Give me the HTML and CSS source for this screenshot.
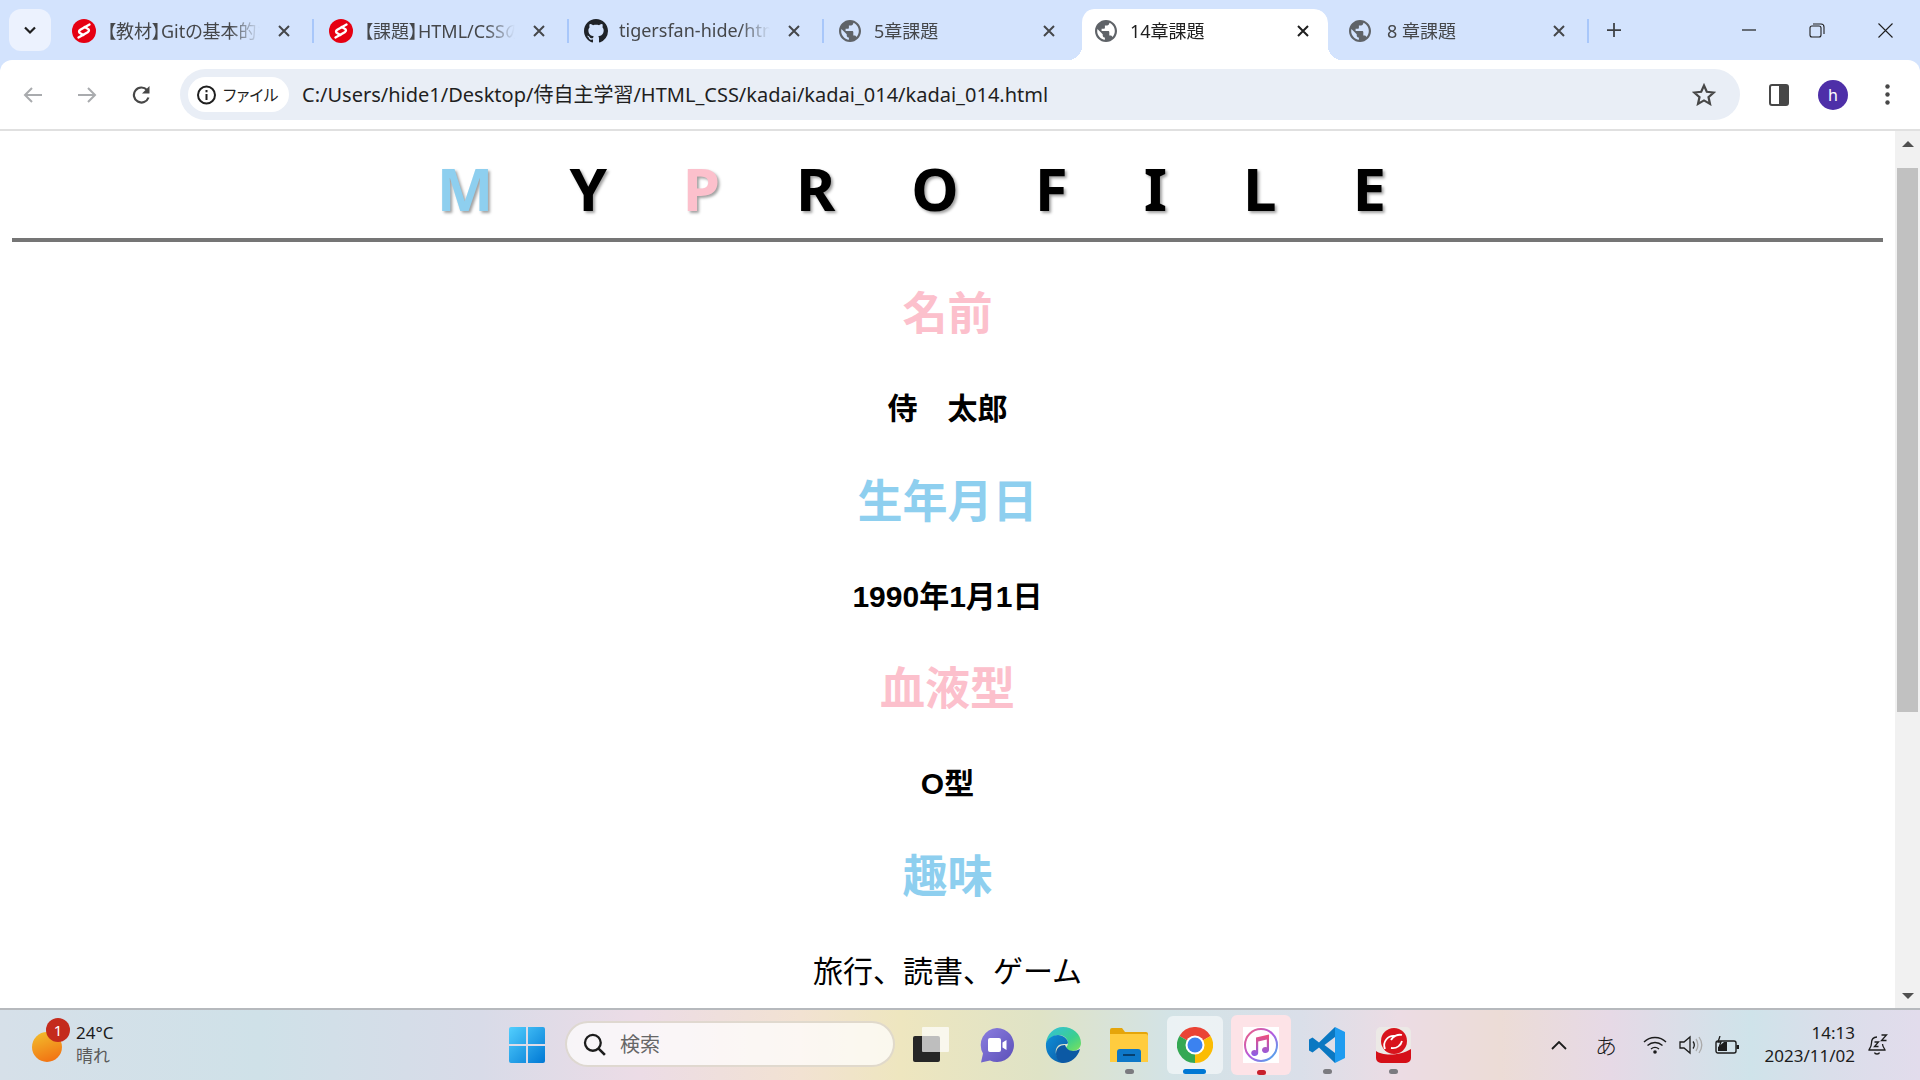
FILE: index.html
```html
<!DOCTYPE html>
<html lang="ja">
<head>
    <meta charset="UTF-8">
    <title>14章課題</title>
    <link rel="stylesheet" href="styles.css">
</head>
<body>
    <svg class="defs" width="0" height="0">
        <symbol id="globe" viewBox="2 2 20 20"><path d="M12 2C6.48 2 2 6.48 2 12s4.48 10 10 10 10-4.48 10-10S17.52 2 12 2zm-1 17.930c-3.950-.49-7-3.850-7-7.930 0-.62.08-1.210.21-1.790L9 15v1c0 1.100.9 2 2 2v1.930zm6.900-2.540c-.26-.81-1-1.390-1.900-1.390h-1v-3c0-.55-.45-1-1-1H8v-2h2c.55 0 1-.45 1-1V7h2c1.100 0 2-.9 2-2v-.41c2.930 1.190 5 4.060 5 7.410 0 2.080-.8 3.970-2.100 5.390z" fill="#5f6368"/></symbol>
        <symbol id="x" viewBox="0 0 12 12"><path d="M1 1l10 10M11 1L1 11" stroke="currentColor" stroke-width="2" fill="none"/></symbol>
        <symbol id="samurai" viewBox="0 0 24 24"><circle cx="12" cy="12" r="12" fill="#e60012"/><path d="M17.500 5.500L8.300 10.800c-1.800 1.200-1.500 2.700 0 3.500l3 1.700" stroke="#fff" stroke-width="2.400" stroke-linecap="round" fill="none"/><path d="M6.500 18.500l9.200-5.300c1.800-1.200 1.500-2.700 0-3.500l-3-1.700" stroke="#fff" stroke-width="2.400" stroke-linecap="round" fill="none"/></symbol>
    </svg>

    <div class="tabstrip">
        <button class="tab-search"><svg width="14" height="9" viewBox="0 0 14 9"><path d="M2 1.500l5 5 5-5" stroke="#1f1f1f" stroke-width="2.200" fill="none"/></svg></button>
        <div class="tab first">
            <svg class="favicon"><use href="#samurai"/></svg>
            <span class="tab-title">【教材】Gitの基本的な</span>
            <svg class="tab-close"><use href="#x"/></svg>
        </div>
        <div class="tab">
            <svg class="favicon"><use href="#samurai"/></svg>
            <span class="tab-title">【課題】HTML/CSSの</span>
            <svg class="tab-close"><use href="#x"/></svg>
        </div>
        <div class="tab">
            <svg class="favicon" viewBox="0 0 16 16"><path fill="#1f2328" d="M8 0C3.580 0 0 3.580 0 8c0 3.540 2.290 6.530 5.470 7.590.4.07.55-.17.55-.38 0-.19-.01-.82-.01-1.490-2.010.37-2.530-.49-2.690-.94-.09-.23-.48-.94-.82-1.130-.28-.15-.68-.52-.01-.53.63-.01 1.080.58 1.230.82.72 1.210 1.870.87 2.330.66.07-.52.28-.87.51-1.070-1.780-.2-3.640-.89-3.640-3.950 0-.87.31-1.590.82-2.150-.08-.2-.36-1.020.08-2.120 0 0 .67-.21 2.200.82.64-.18 1.320-.27 2-.27.68 0 1.360.09 2 .27 1.530-1.040 2.200-.82 2.200-.82.44 1.100.16 1.920.08 2.120.51.56.82 1.270.82 2.150 0 3.070-1.870 3.750-3.650 3.950.29.25.54.73.54 1.480 0 1.070-.01 1.930-.01 2.200 0 .21.15.46.55.38A8.013 8.013 0 0016 8c0-4.420-3.580-8-8-8z"/></svg>
            <span class="tab-title">tigersfan-hide/html</span>
            <svg class="tab-close"><use href="#x"/></svg>
        </div>
        <div class="tab">
            <svg class="favicon globe"><use href="#globe"/></svg>
            <span class="tab-title">5章課題</span>
            <svg class="tab-close"><use href="#x"/></svg>
        </div>
        <div class="tab active">
            <svg class="favicon globe"><use href="#globe"/></svg>
            <span class="tab-title">14章課題</span>
            <svg class="tab-close"><use href="#x"/></svg>
        </div>
        <div class="tab after-active">
            <svg class="favicon globe"><use href="#globe"/></svg>
            <span class="tab-title">8 章課題</span>
            <svg class="tab-close"><use href="#x"/></svg>
        </div>
        <div class="tab-end">
            <svg width="16" height="16" viewBox="0 0 16 16"><path d="M8 0v16M0 8h16" stroke="#3c3f43" stroke-width="2"/></svg>
        </div>
        <div class="window-controls">
            <span class="win-btn"><svg width="14" height="2"><path d="M0 1h14" stroke="#1f1f1f" stroke-width="1.200"/></svg></span>
            <span class="win-btn"><svg width="16" height="15" viewBox="0 0 16 15"><rect x="1" y="3" width="11" height="11" rx="2" stroke="#1f1f1f" fill="none" stroke-width="1.100"/><path d="M4 1h8c2 0 3 1 3 3v7" stroke="#1f1f1f" fill="none" stroke-width="1.100"/></svg></span>
            <span class="win-btn"><svg width="15" height="15"><path d="M.5.5l14 14M14.500.5l-14 14" stroke="#1f1f1f" stroke-width="1.100"/></svg></span>
        </div>
    </div>

    <div class="toolbar">
        <span class="nav-btn"><svg width="20" height="16" viewBox="0 0 20 16"><path d="M19 8H2M9 1L2 8l7 7" stroke="#a9abae" stroke-width="2" fill="none"/></svg></span>
        <span class="nav-btn"><svg width="20" height="16" viewBox="0 0 20 16"><path d="M1 8h17M11 1l7 7-7 7" stroke="#a9abae" stroke-width="2" fill="none"/></svg></span>
        <span class="nav-btn"><svg width="19" height="18" viewBox="0 0 19 18"><path d="M16.500 11.500A7.500 7.500 0 1 1 15 4" stroke="#474747" stroke-width="2.200" fill="none"/><path d="M17.500 0v7.500H10z" fill="#474747"/></svg></span>
        <div class="omnibox">
            <div class="chip">
                <svg width="24" height="20" viewBox="0 0 24 20"><circle cx="10.500" cy="10" r="8.500" stroke="#1f1f1f" stroke-width="2" fill="none"/><path d="M10.500 9v6M10.500 5v2.200" stroke="#1f1f1f" stroke-width="2"/></svg>
                <span>ファイル</span>
            </div>
            <span class="url">C:/Users/hide1/Desktop/侍自主学習/HTML_CSS/kadai/kadai_014/kadai_014.html</span>
            <svg class="star" width="24" height="23" viewBox="0 0 24 23"><path d="M12 2.500l2.800 6.300 6.900.7-5.200 4.600 1.500 6.800-6-3.500-6 3.500 1.500-6.800-5.200-4.600 6.900-.7z" stroke="#474747" stroke-width="2.200" fill="none"/></svg>
        </div>
        <span class="nav-btn first-side"><svg width="20" height="22" viewBox="0 0 20 22"><rect x="1" y="1" width="18" height="20" rx="2" stroke="#474747" stroke-width="2" fill="#fff"/><rect x="10" y="1" width="9" height="20" fill="#474747"/></svg></span>
        <span class="nav-btn"><span class="avatar">h</span></span>
        <span class="nav-btn"><svg width="5" height="21" viewBox="0 0 5 21"><circle cx="2.500" cy="2.500" r="2.200" fill="#474747"/><circle cx="2.500" cy="10.500" r="2.200" fill="#474747"/><circle cx="2.500" cy="18.500" r="2.200" fill="#474747"/></svg></span>
    </div>

    <div class="viewport">
        <main class="page">
            <h1><span class="blue">M</span>Y <span class="pink">P</span>ROFILE</h1>
            <h2 class="pink">名前</h2>
            <p class="strong">侍　太郎</p>
            <h2 class="blue">生年月日</h2>
            <p class="strong">1990年1月1日</p>
            <h2 class="pink">血液型</h2>
            <p class="strong">O型</p>
            <h2 class="blue">趣味</h2>
            <p>旅行、読書、ゲーム</p>
        </main>
        <div class="scrollbar">
            <span class="arrow-up"></span>
            <span class="thumb"></span>
            <span class="arrow-down"></span>
        </div>
    </div>

    <div class="taskbar">
        <div class="weather">
            <span class="sun"><span class="badge">1</span></span>
            <div class="weather-text">
                <span>24°C</span>
                <span class="muted">晴れ</span>
            </div>
        </div>
        <span class="slot">
            <svg width="36" height="36" viewBox="0 0 36 36">
                <defs>
                    <linearGradient id="win" x1="0" y1="0" x2="1" y2="1"><stop offset="0" stop-color="#52cffe"/><stop offset="1" stop-color="#0078d4"/></linearGradient>
                </defs>
                <path fill="url(#win)" d="M0 2a2 2 0 0 1 2-2h15v17H0zM19 0h15a2 2 0 0 1 2 2v15H19zM0 19h17v17H2a2 2 0 0 1-2-2zM19 19h17v15a2 2 0 0 1-2 2H19z"/>
            </svg>
        </span>
        <div class="search">
            <svg width="23" height="23" viewBox="0 0 21 21"><circle cx="9" cy="9" r="7.200" stroke="#1c1c1c" stroke-width="2.100" fill="none"/><path d="M14 14l6 6" stroke="#1c1c1c" stroke-width="2.400"/></svg>
            <span>検索</span>
        </div>
        <span class="slot first-app">
            <svg width="36" height="36" viewBox="0 0 36 36"><rect y="9" width="27" height="26" rx="2" fill="#262626"/><rect x="9" y="0" width="27" height="25" rx="1" fill="#fff" fill-opacity=".7"/></svg>
        </span>
        <span class="slot">
            <svg width="36" height="36" viewBox="0 0 36 36">
                <defs>
                    <linearGradient id="chat" x1="0" y1="0" x2="1" y2="1"><stop offset="0" stop-color="#8c7fe0"/><stop offset="1" stop-color="#5b4fb8"/></linearGradient>
                </defs>
                <path fill="url(#chat)" d="M18 1a17 17 0 1 1-7 32.500L2 35.500l2-9A17 17 0 0 1 18 1z"/>
                <rect x="9" y="11" width="13" height="14" rx="2" fill="#fff"/>
                <path d="M23.500 15.500l4-2.500v10l-4-2.500z" fill="#fff"/>
            </svg>
        </span>
        <span class="slot">
            <svg width="36" height="36" viewBox="0 0 36 36">
                <defs>
                    <linearGradient id="edge1" x1="0" y1="0" x2="1" y2="1"><stop offset="0" stop-color="#33bfe0"/><stop offset=".6" stop-color="#3ccf8e"/><stop offset="1" stop-color="#7de25a"/></linearGradient>
                    <linearGradient id="edge2" x1="0" y1="0" x2="1" y2="1"><stop offset="0" stop-color="#0f8fd8"/><stop offset="1" stop-color="#0c59a4"/></linearGradient>
                </defs>
                <path fill="url(#edge1)" d="M1 16C2 7 9 0 18 0c10 0 18 7 18 16 0 5-4 8-9 8-3 0-6-1-6-3 0-1 2-2 2-5 0-4-4-8-9-8S4 11 1 16z"/>
                <path fill="url(#edge2)" d="M1 16C3 11 8 8 13 8c5 0 10 4 10 8 0 1-2 1-4 1-7 0-9 5-8 10 1 4 5 8 9 9C8 36 0 28 1 16z"/>
                <path fill="#0c59a4" d="M18 36c-4-1-7-5-7-9 0-6 4-9 9-9 1 3 4 6 8 6 2 0 5-1 7-2-2 8-9 14-17 14z"/>
            </svg>
        </span>
        <span class="slot has-dot">
            <svg width="38" height="34" viewBox="0 0 38 34">
                <path d="M0 2a2 2 0 0 1 2-2h10l3 4h21a2 2 0 0 1 2 2v4H0z" fill="#e5a50a"/>
                <path d="M0 6h36a2 2 0 0 1 2 2v26H0z" fill="#ffcc3f"/>
                <path d="M7 34V24a3 3 0 0 1 3-3h18a3 3 0 0 1 3 3v10z" fill="#0e78c8"/>
                <rect x="13" y="26" width="12" height="2" fill="#06406f"/>
            </svg>
        </span>
        <span class="slot chrome-slot">
            <svg width="36" height="36" viewBox="0 0 36 36">
                <path d="M18 18L2.400 9A18 18 0 0 1 33.600 9z" fill="#ea4335"/>
                <path d="M18 18L33.600 9A18 18 0 0 1 18 36z" fill="#fbbc04"/>
                <path d="M18 18L18 36A18 18 0 0 1 2.400 9z" fill="#34a853"/>
                <circle cx="18" cy="18" r="9.500" fill="#fff"/>
                <circle cx="18" cy="18" r="7.500" fill="#3b82f0"/>
            </svg>
            <span class="running"></span>
        </span>
        <span class="slot itunes-slot">
            <svg width="36" height="36" viewBox="0 0 36 36">
                <defs>
                    <linearGradient id="ring" x1="0" y1="0" x2="1" y2="1"><stop offset="0" stop-color="#f0607c"/><stop offset=".5" stop-color="#b45be0"/><stop offset="1" stop-color="#3bb6f0"/></linearGradient>
                    <linearGradient id="note" x1="0" y1="0" x2="0" y2="1"><stop offset="0" stop-color="#f0507c"/><stop offset="1" stop-color="#8a5ce8"/></linearGradient>
                </defs>
                <rect width="36" height="36" fill="#fff"/>
                <circle cx="18" cy="18" r="16" stroke="url(#ring)" stroke-width="2" fill="#fff"/>
                <path fill="url(#note)" d="M13 10.500L26 7.500v15.500a3.500 3 0 1 1-2.200-2.800V12.500l-8.600 2V26a3.500 3 0 1 1-2.200-2.800z"/>
            </svg>
            <span class="dot red"></span>
        </span>
        <span class="slot has-dot">
            <svg width="36" height="36" viewBox="0 0 36 36">
                <path d="M26 0l10 5v26l-10 5z" fill="#1f9cf0"/>
                <path d="M26 0L10 15.500 3.500 10.500 0 12.500v11l3.500 2L10 20.500 26 36V26L15.500 18 26 10z" fill="#0a78c2"/>
            </svg>
        </span>
        <span class="slot has-dot">
            <svg width="35" height="36" viewBox="0 0 35 36">
                <rect width="35" height="36" rx="5" fill="#ece9e6"/>
                <path d="M0 24c6 5 24 5 35-2v9a5 5 0 0 1-5 5H5a5 5 0 0 1-5-5z" fill="#d50f18"/>
                <circle cx="18" cy="14" r="13" fill="#d8141c"/>
                <path d="M9 22c-3-7 3-14 10-13M26 8c-4-1-9 1-11 5M15 21c6 1 10-3 11-7" stroke="#fff" stroke-width="1.800" fill="none"/>
            </svg>
        </span>
        <div class="tray">
            <svg class="caret" width="16" height="9" viewBox="0 0 16 9"><path d="M1 8l7-7 7 7" stroke="#1c1c1c" stroke-width="1.800" fill="none"/></svg>
            <span class="ime">あ</span>
            <svg class="wifi" width="24" height="18" viewBox="0 0 24 18"><path d="M1 6c6-6 16-6 22 0M4.500 9.500c4.500-4 10.500-4 15 0M8 13c2.500-2 5.500-2 8 0" stroke="#1c1c1c" stroke-width="1.400" fill="none"/><circle cx="12" cy="16" r="1.800" fill="#1c1c1c"/></svg>
            <svg class="speaker" width="24" height="20" viewBox="0 0 24 20"><path d="M1 7h4l6-5v16l-6-5H1z" stroke="#1c1c1c" stroke-width="1.300" fill="none"/><path d="M14 6.500c1.500 2 1.500 5 0 7" stroke="#1c1c1c" stroke-width="1.300" fill="none"/><path d="M17 4c2.500 3.500 2.500 8.500 0 12M20 2c3.500 5 3.500 11 0 16" stroke="#aaa" stroke-width="1.300" fill="none"/></svg>
            <svg class="battery" width="24" height="19" viewBox="0 0 24 19"><rect x="1" y="5" width="20" height="12" rx="2" stroke="#1c1c1c" stroke-width="1.400" fill="none"/><rect x="21.500" y="9" width="2.500" height="4" fill="#1c1c1c"/><path d="M3 15v-4l6-5h3v9z" fill="#1c1c1c"/><path d="M5 0L3 6h3L4.500 10" stroke="#1c1c1c" stroke-width="1.300" fill="none"/></svg>
            <div class="clock">
                <span>14:13</span>
                <span>2023/11/02</span>
            </div>
            <svg class="bell" width="20" height="22" viewBox="0 0 20 22"><path d="M9 3C5 3 3.500 6 3.500 9c0 4-2.500 6-2.500 7h16c0-1-2.500-3-2.500-6M6.500 18.500c.5 2 4.500 2 5 0" stroke="#1c1c1c" stroke-width="1.300" fill="none"/><path d="M6.500 8h4l-4 4.500h4M13.500 1h5l-5 5.500h5" stroke="#1c1c1c" stroke-width="1.300" fill="none"/></svg>
        </div>
    </div>
</body>
</html>
```

FILE: styles.css
```css
* {
    box-sizing: border-box;
}
body {
    margin: 0;
    height: 1080px;
    overflow: hidden;
    display: flex;
    flex-direction: column;
    background-color: #d3e3fd;
    font-family: "Liberation Sans", "Noto Sans CJK JP", sans-serif;
    color: #000;
}
.defs {
    position: absolute;
}

/* tab strip */
.tabstrip {
    display: flex;
    height: 60px;
    padding: 9px 0 0 9px;
    flex: none;
    font-family: "Noto Sans", "Noto Sans CJK JP", sans-serif;
}
.tab-search {
    width: 42px;
    height: 42px;
    margin-right: 4px;
    padding: 0;
    border: none;
    border-radius: 12px;
    background-color: #ecf2fe;
    display: flex;
    align-items: center;
    justify-content: center;
}
.tab {
    width: 255px;
    height: 51px;
    padding: 0 22px 8px 15px;
    display: flex;
    align-items: center;
    position: relative;
    border-left: 2px solid transparent;
    background-clip: padding-box;
    color: #45474a;
    font-size: 18px;
}
.tab::before {
    content: "";
    position: absolute;
    left: -2px;
    top: 10px;
    width: 2px;
    height: 24px;
    background-color: #a8c7fa;
}
.tab.first {
    width: 257px;
}
.tab.first::before,
.tab.after-active::before {
    display: none;
}
.favicon {
    width: 24px;
    height: 24px;
    margin-right: 11px;
    flex: none;
}
.favicon.globe {
    width: 22px;
    height: 22px;
    margin-right: 13px;
}
.tab-title {
    flex: 1;
    margin-top: -2px;
    overflow: hidden;
    white-space: nowrap;
    font-feature-settings: "palt";
    -webkit-mask-image: linear-gradient(to right, #000 80%, transparent 100%);
    mask-image: linear-gradient(to right, #000 80%, transparent 100%);
}
.after-active .tab-title {
    padding-left: 3px;
}
.tab-close {
    width: 12px;
    height: 12px;
    margin-left: 18px;
    flex: none;
}
.tab.active {
    width: 248px;
    margin: 0 4px 0 3px;
    padding-left: 13px;
    padding-right: 19px;
    background-color: #fff;
    border-radius: 14px 14px 0 0;
    color: #1f1f1f;
}
.tab.active::before {
    left: -14px;
    top: auto;
    bottom: 0;
    width: 14px;
    height: 14px;
    background: radial-gradient(circle at 0 0, transparent 14px, #fff 14px);
}
.tab.active::after {
    content: "";
    position: absolute;
    right: -14px;
    bottom: 0;
    width: 14px;
    height: 14px;
    background: radial-gradient(circle at 100% 0, transparent 14px, #fff 14px);
}
.tab-end {
    width: 34px;
    height: 51px;
    padding: 0 0 10px 18px;
    display: flex;
    align-items: center;
    position: relative;
    border-left: 2px solid transparent;
}
.tab-end::before {
    content: "";
    position: absolute;
    left: -2px;
    top: 10px;
    width: 2px;
    height: 24px;
    background-color: #a8c7fa;
}
.window-controls {
    display: flex;
    margin-left: auto;
    padding-right: 1px;
    height: 42px;
}
.win-btn {
    width: 68px;
    display: flex;
    align-items: center;
    justify-content: center;
}

/* toolbar */
.toolbar {
    height: 71px;
    flex: none;
    padding: 9px 6px;
    display: flex;
    align-items: center;
    background-color: #fff;
    border-bottom: 2px solid #e0e0e0;
    border-radius: 12px 12px 0 0;
}
.nav-btn {
    width: 54px;
    display: flex;
    align-items: center;
    justify-content: center;
}
.omnibox {
    width: 1560px;
    height: 51px;
    margin-left: 12px;
    padding-left: 8px;
    display: flex;
    align-items: center;
    background-color: #e9eef6;
    border-radius: 26px;
}
.chip {
    width: 101px;
    height: 35px;
    padding-left: 8px;
    display: flex;
    align-items: center;
    background-color: #fff;
    border-radius: 18px;
    font-size: 16px;
    font-family: "Noto Sans CJK JP", sans-serif;
    font-feature-settings: "palt";
    color: #1f1f1f;
}
.chip span {
    margin-left: 3px;
    margin-top: -1px;
}
.url {
    margin-left: 13px;
    margin-top: -2px;
    font-size: 20px;
    font-family: "Noto Sans", "Noto Sans CJK JP", sans-serif;
    color: #1f1f1f;
    white-space: nowrap;
}
.star {
    margin-left: auto;
    margin-right: 24px;
}
.first-side {
    margin-left: 12px;
}
.avatar {
    width: 30px;
    height: 30px;
    border-radius: 50%;
    background-color: #4e2fa8;
    color: #fff;
    font-size: 16px;
    font-family: "Noto Sans", sans-serif;
    display: flex;
    align-items: center;
    justify-content: center;
}

/* page */
.viewport {
    height: 877px;
    flex: none;
    display: flex;
    background-color: #fff;
    overflow: hidden;
}
.page {
    flex: 1;
    padding: 12px 12px 0;
    text-align: center;
    line-height: 1.5;
}
h1 {
    margin: 0 0 39px;
    padding-bottom: 5px;
    padding-left: 4px;
    border-bottom: 4px solid #757575;
    font-family: "Noto Sans", "Noto Sans CJK JP", sans-serif;
    font-size: 60px;
    font-weight: 700;
    letter-spacing: 76px;
    word-spacing: -92px;
    text-shadow: 2px 2px 3px #a0a0a0;
}
h2 {
    margin: 37.6px 0;
    font-size: 45px;
    font-weight: 700;
}
p {
    margin: 0;
    font-size: 30px;
}
.strong {
    font-weight: 700;
}
.pink {
    color: #fcc0cc;
}
.blue {
    color: #8ecfef;
}
.scrollbar {
    width: 25px;
    flex: none;
    padding: 10px 2px 9px;
    display: flex;
    flex-direction: column;
    align-items: center;
    background-color: #f1f1f1;
}
.arrow-up {
    border-left: 6px solid transparent;
    border-right: 6px solid transparent;
    border-bottom: 6px solid #505050;
}
.thumb {
    width: 21px;
    height: 544px;
    margin-top: 21px;
    background-color: #c1c1c1;
}
.arrow-down {
    margin-top: auto;
    border-left: 6px solid transparent;
    border-right: 6px solid transparent;
    border-top: 6px solid #505050;
}

/* taskbar */
.taskbar {
    height: 72px;
    flex: none;
    display: flex;
    align-items: center;
    border-top: 2px solid #b6b9bd;
    font-family: "Noto Sans", "Noto Sans CJK JP", sans-serif;
    color: #1c1c1c;
    background: linear-gradient(to right, #d6e0e9 0, #cfe1e8 260px, #d8dbe8 480px, #ecdce6 640px, #f2e2d2 800px, #eee6bf 900px, #dfe3c6 1040px, #d3e3e6 1170px, #dadfe9 1300px, #ecdce4 1400px, #ecdcd6 1500px, #e6d9e6 1610px, #cfe3ea 1750px, #dadeea 1830px, #e2dcec 1920px);
}
.weather {
    width: 494px;
    padding-left: 32px;
    display: flex;
    align-items: center;
    flex: none;
}
.sun {
    width: 30px;
    height: 30px;
    margin-top: 3px;
    border-radius: 50%;
    background: linear-gradient(160deg, #f2c12e, #f2690f);
    position: relative;
}
.badge {
    position: absolute;
    top: -14px;
    left: 14px;
    width: 24px;
    height: 24px;
    border-radius: 50%;
    background-color: #c42b1c;
    color: #fff;
    font-size: 15px;
    line-height: 24px;
    text-align: center;
}
.weather-text {
    margin-left: 14px;
    margin-top: -3px;
    display: flex;
    flex-direction: column;
    font-size: 17px;
    line-height: 23px;
}
.muted {
    color: #5a5a5a;
}
.slot {
    width: 66px;
    height: 58px;
    flex: none;
    display: flex;
    align-items: center;
    justify-content: center;
    position: relative;
}
.first-app {
    margin-left: 3px;
}
.search {
    width: 330px;
    height: 46px;
    margin-left: 5px;
    margin-top: -2px;
    padding-left: 16px;
    display: flex;
    align-items: center;
    background-color: rgba(255, 255, 255, 0.72);
    border: 2px solid rgba(190, 180, 160, 0.45);
    border-radius: 23px;
    font-size: 20px;
    color: #666;
}
.search span {
    margin-left: 14px;
    margin-top: -2px;
}
.has-dot::after,
.dot {
    content: "";
    position: absolute;
    left: 29px;
    bottom: 0;
    width: 9px;
    height: 5px;
    border-radius: 3px;
    background-color: #7b7b80;
}
.dot.red {
    left: 26px;
    background-color: #c8202c;
}
.chrome-slot {
    width: 56px;
    margin: 0 5px;
    background-color: rgba(255, 255, 255, 0.55);
    border-radius: 6px;
}
.running {
    position: absolute;
    left: 16px;
    bottom: 0;
    width: 23px;
    height: 5px;
    border-radius: 3px;
    background-color: #0078d4;
}
.itunes-slot {
    width: 60px;
    height: 60px;
    margin: 0 3px;
    background-color: #fde3e7;
    border-radius: 6px;
}
.tray {
    margin-left: auto;
    padding-right: 32px;
    display: flex;
    align-items: center;
}
.ime {
    margin-left: 28px;
    margin-top: -2px;
    font-size: 22px;
    font-family: "Noto Sans CJK JP", sans-serif;
    font-weight: 300;
}
.wifi {
    margin-left: 26px;
}
.speaker,
.battery {
    margin-left: 12px;
}
.clock {
    width: 90px;
    margin-left: 26px;
    margin-top: -3px;
    display: flex;
    flex-direction: column;
    align-items: flex-end;
    font-size: 17px;
    line-height: 23px;
    white-space: nowrap;
}
.bell {
    margin-left: 13px;
}
```
